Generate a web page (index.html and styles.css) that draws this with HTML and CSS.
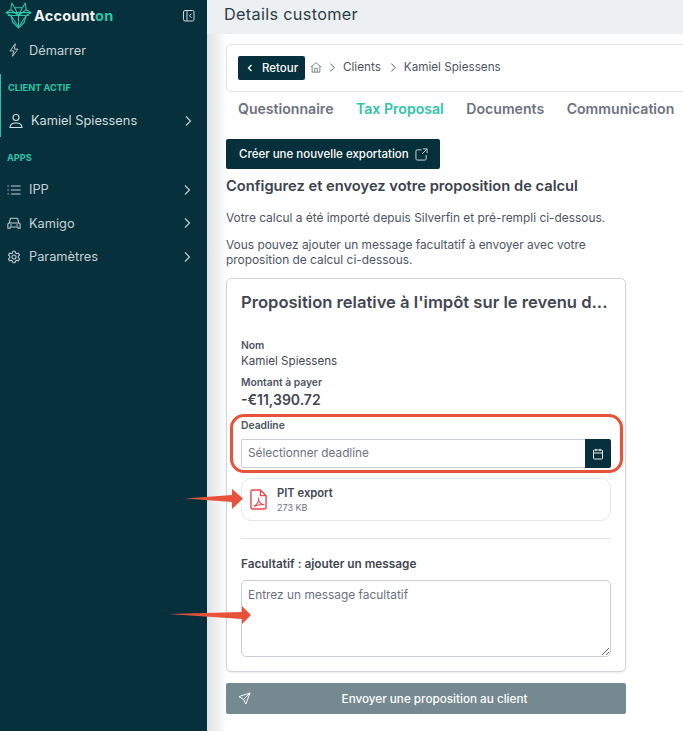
FILE: index.html
```html
<!DOCTYPE html>
<html lang="fr">
<head>
<meta charset="utf-8">
<title>Details customer</title>
<link rel="stylesheet" href="styles.css">
</head>
<body>
<div class="app">
  <aside class="sidebar">
    <div class="brand">
      <svg class="logo" viewBox="0 0 28 28" fill="none" stroke="#2fc4a8" stroke-width="1.1" stroke-linejoin="round">
        <path d="M7 1l3 5h8l3-5 1 7 5 3-5 3-2 7-6 6-6-6-2-7-5-3 5-3z"/>
        <path d="M1 11h26M3 14h22M6 8l8 6 8-6M6 14l8 12 8-12M10 6l4 8 4-8M14 14v12"/>
      </svg>
      <span class="brand-name">Account<em>on</em></span>
      <svg class="collapse" viewBox="0 0 12 12" fill="none" stroke="#cfd8da" stroke-width="1"><rect x=".5" y=".5" width="10.5" height="10.5" rx="1.5"/><path d="M4 .5v10.500M8.500 3.700L6.500 5.800l2 2.100"/></svg>
    </div>
    <a class="nav first">
      <svg class="ico" viewBox="0 0 16 16" fill="none" stroke="#c3ced0" stroke-width="1.100" stroke-linejoin="round"><path d="M9.500 .8L3.500 9h4.200l-1.500 6.200L12.500 7H8.300z"/></svg>
      <span>Démarrer</span>
    </a>
    <div class="active-block">
      <div class="section">CLIENT ACTIF</div>
      <a class="nav client">
        <svg class="ico" viewBox="0 0 16 16" fill="none" stroke="#d5dddf" stroke-width="1.100" stroke-linecap="round"><circle cx="8" cy="4.500" r="3"/><path d="M2 14.500c0-3 2.500-4.500 6-4.500s6 1.500 6 4.500z"/></svg>
        <span>Kamiel Spiessens</span>
        <svg class="chev" viewBox="0 0 8 12" fill="none" stroke="#c3ced0" stroke-width="1.200"><path d="M2 1.500L6.500 6 2 10.500"/></svg>
      </a>
    </div>
    <div class="section apps">APPS</div>
    <a class="nav">
      <svg class="ico" viewBox="0 0 16 16" fill="none" stroke="#c3ced0" stroke-width="1.200"><path d="M4.500 3.500h11M4.500 8h11M4.500 12.500h11M.500 3.500h1.500M.500 8h1.500M.500 12.500h1.500"/></svg>
      <span>IPP</span>
      <svg class="chev" viewBox="0 0 8 12" fill="none" stroke="#c3ced0" stroke-width="1.200"><path d="M2 1.500L6.500 6 2 10.500"/></svg>
    </a>
    <a class="nav">
      <svg class="ico" viewBox="0 0 16 16" fill="none" stroke="#c3ced0" stroke-width="1.200" stroke-linejoin="round"><path d="M1 14V9l1.500-1 1.500-5.500h8L13.500 8 15 9v5h-2.500v-1.500h-9V14zM2.500 8h11M3.500 10.300h2M10.500 10.300h2"/></svg>
      <span>Kamigo</span>
      <svg class="chev" viewBox="0 0 8 12" fill="none" stroke="#c3ced0" stroke-width="1.200"><path d="M2 1.500L6.500 6 2 10.500"/></svg>
    </a>
    <a class="nav">
      <svg class="ico" viewBox="0 0 16 16" fill="none" stroke="#c3ced0" stroke-width="1.200" stroke-linejoin="round"><circle cx="8" cy="8" r="2.300"/><path d="M6.700 1.500h2.600l.4 1.900 1.500.8 1.800-.7 1.300 2.300-1.400 1.300v1.800l1.400 1.300-1.300 2.300-1.800-.7-1.500.8-.4 1.900H6.700l-.4-1.900-1.500-.8-1.800.7-1.300-2.300 1.400-1.300V7.100L1.700 5.800 3 3.500l1.800.7 1.500-.8z"/></svg>
      <span>Paramètres</span>
      <svg class="chev" viewBox="0 0 8 12" fill="none" stroke="#c3ced0" stroke-width="1.200"><path d="M2 1.500L6.500 6 2 10.500"/></svg>
    </a>
  </aside>

  <main class="main">
    <header class="topbar">Details customer</header>
    <div class="content">
      <nav class="crumbs">
        <button class="back"><svg class="back-ico" viewBox="0 0 8 10" fill="none" stroke="#fff" stroke-width="1.300"><path d="M5.500 2L2.500 5l3 3"/></svg>Retour</button>
        <svg class="home" viewBox="0 0 14 14" fill="none" stroke="#5b6672" stroke-width=".9"><path d="M1 7l6-5 6 5M2.500 6v7h9V6M5.500 13V8.500h3V13"/></svg>
        <svg class="sep" viewBox="0 0 8 12" fill="none" stroke="#4a5560" stroke-width="1.100"><path d="M1.500 1.500L6 6l-4.500 4.500"/></svg>
        <span>Clients</span>
        <svg class="sep" viewBox="0 0 8 12" fill="none" stroke="#4a5560" stroke-width="1.100"><path d="M1.500 1.500L6 6l-4.500 4.500"/></svg>
        <span>Kamiel Spiessens</span>
      </nav>
      <div class="tabs">
        <span>Questionnaire</span>
        <span class="tab-on">Tax Proposal</span>
        <span>Documents</span>
        <span>Communication</span>
      </div>
      <button class="export">Créer une nouvelle exportation
        <svg class="export-ico" viewBox="0 0 14 14" fill="none" stroke="#d8e0e2" stroke-width="1"><path d="M7 2H2.500A1.500 1.500 0 0 0 1 3.500v8A1.500 1.500 0 0 0 2.500 13h8a1.500 1.500 0 0 0 1.500-1.500V7.500M8.500 1H13v4.500M13 1L7.500 6.500"/></svg>
      </button>
      <h2 class="heading">Configurez et envoyez votre proposition de calcul</h2>
      <p class="para p1">Votre calcul a été importé depuis Silverfin et pré-rempli ci-dessous.</p>
      <p class="para p2">Vous pouvez ajouter un message facultatif à envoyer avec votre proposition de calcul ci-dessous.</p>

      <section class="card">
        <h3 class="card-title">Proposition relative à l'impôt sur le revenu d...</h3>
        <div class="label l-nom">Nom</div>
        <div class="value">Kamiel Spiessens</div>
        <div class="label l-mont">Montant à payer</div>
        <div class="amount">-€11,390.72</div>
        <div class="label l-dead">Deadline</div>
        <div class="date">
          <div class="date-input">Sélectionner deadline</div>
          <div class="date-btn"><svg viewBox="0 0 12 12" fill="none" stroke="#fff" stroke-width=".9"><rect x="1.500" y="2" width="9" height="9" rx="1"/><path d="M1.500 5h9M4 .8v2.400M8 .8v2.400"/></svg></div>
        </div>
        <div class="file">
          <svg class="pdf" viewBox="0 0 18 22" fill="none" stroke="#e8484c" stroke-width="1.500" stroke-linejoin="round"><path d="M11 1H3a2 2 0 0 0-2 2v16a2 2 0 0 0 2 2h12a2 2 0 0 0 2-2V7z"/><path d="M11 1v6h6" stroke-width="1.300"/><path d="M9 9c.8 3-1.500 7-5 9.500M9 12c1 2 3 4 5.500 4.500-2.500-.5-6 0-9 1.500" stroke-width="1.100"/></svg>
          <div class="file-text">
            <div class="file-name">PIT export</div>
            <div class="file-size">273 KB</div>
          </div>
        </div>
        <hr class="rule">
        <div class="label-lg">Facultatif : ajouter un message</div>
        <textarea class="message" placeholder="Entrez un message facultatif"></textarea>
      </section>
      <button class="send">
        <svg class="send-ico" viewBox="0 0 14 14" fill="none" stroke="#fff" stroke-width="1" stroke-linejoin="round"><path d="M13 1L1 5l5 3 2.500 5zM13 1L6 8"/></svg>
        Envoyer une proposition au client
      </button>
    </div>
  </main>
</div>

<div class="callout"></div>
<svg class="arrow arrow-a" viewBox="0 0 58 20"><path d="M0 9.500L47 6V0l11 9.500L47 20v-7z" fill="#e8523a"/></svg>
<svg class="arrow arrow-b" viewBox="0 0 84 18"><path d="M0 8L74 6V0l9 9-9 9v-5z" fill="#e8523a"/></svg>
</body>
</html>
```

FILE: styles.css
```css
* { box-sizing: border-box; }
html, body { margin: 0; height: 731px; overflow: hidden; background: #fff; }
body { font-family: Inter, "Liberation Sans", sans-serif; color: #3f4752; position: relative; }
button { font-family: inherit; border: 0; cursor: pointer; }

.app { display: flex; height: 731px; }

.sidebar { width: 207px; flex: none; background: #06303b; color: #c9d3d5; font-size: 12.800px; }
.brand { height: 34px; display: flex; align-items: center; padding: 0 0 3px 5px; }
.logo { width: 27px; height: 27px; flex: none; }
.brand-name { margin-left: 2px; font-size: 14.500px; font-weight: 700; color: #f2f5f5; letter-spacing: .2px; }
.brand-name em { font-style: normal; color: #2fc4a8; }
.collapse { width: 12px; height: 12px; margin-left: auto; margin-right: 12px; }

.nav { display: flex; align-items: center; height: 33.500px; padding-left: 7px; padding-right: 16px; }
.nav.first { height: 32px; }
.ico { width: 14px; height: 14px; flex: none; margin-right: 8px; }
.chev { width: 8px; height: 12px; margin-left: auto; }
.active-block { margin-top: 8px; height: 63px; border-left: 1.500px solid #2fc4a8; }
.section { height: 27px; line-height: 28px; padding-left: 7px; font-size: 9.200px; font-weight: 700; color: #2fc4a8; }
.nav.client { height: 39px; padding-left: 7px; padding-right: 15px; color: #d5dddf; }
.nav.client .ico { width: 16px; height: 16px; margin-right: 7px; }
.section.apps { margin-top: 7px; height: 21px; line-height: 28px; margin-bottom: 8px; }

.main { flex: 1; min-width: 0; overflow: hidden; position: relative; }
.main::before { content: ""; position: absolute; left: 0; top: 0; bottom: 0; width: 20px; background: linear-gradient(90deg, #dfe1e2, rgba(255,255,255,0)); }
.topbar { height: 34px; background: #edf0f3; padding-left: 17px; font-size: 16.300px; line-height: 29px; color: #2b3d46; letter-spacing: .3px; position: relative; }
.content { padding: 10px 0 0 19px; position: relative; }

.crumbs { width: 470px; height: 48px; border: 1px solid #e1e4e8; border-radius: 4px; background: #fff; display: flex; align-items: center; padding-left: 11px; font-size: 11.700px; color: #4b5563; }
.back { width: 67px; height: 24px; background: #06303b; color: #fff; border-radius: 2px; font-size: 11.500px; font-weight: 500; display: flex; align-items: center; padding: 0 0 0 8px; gap: 8px; margin-right: 5px; }
.back-ico { width: 8px; height: 10px; }
.home { width: 12px; height: 12px; margin-right: 7px; margin-bottom: 2px; }
.sep { width: 7px; height: 11px; margin-right: 7px; margin-bottom: 1px; }
.crumbs span { margin-right: 9px; margin-bottom: 2px; }

.tabs { display: flex; gap: 22.500px; height: 36px; padding-left: 12px; padding-top: 8px; font-size: 14.100px; line-height: 17px; font-weight: 600; color: #6b7280; white-space: nowrap; }
.tab-on { color: #2fc4a8; }

.export { width: 214px; height: 30px; margin-top: 11px; background: #06303b; color: #fff; border-radius: 2px; font-size: 11.500px; font-weight: 500; display: flex; align-items: center; padding: 0 0 0 13px; white-space: nowrap; }
.export-ico { width: 13px; height: 13px; margin-left: 6px; flex: none; }

.heading { margin: 8px 0 0; font-size: 14.700px; line-height: 18px; font-weight: 600; color: #3a424d; }
.para { margin: 0; font-size: 11.900px; line-height: 15px; color: #4b5563; width: 400px; }
.p1 { margin-top: 15px; }
.p2 { margin-top: 12px; }

.card { width: 400px; height: 394px; margin-top: 11px; border: 1px solid #d1d5db; border-radius: 5px; padding: 13px 14px 0; box-shadow: 0 1px 2px rgba(0,0,0,.08); background: #fff; }
.card-title { margin: 0; font-size: 16.600px; line-height: 20px; font-weight: 600; color: #3f4752; white-space: nowrap; }
.label { font-size: 10.300px; font-weight: 600; color: #4b5563; line-height: 12px; }
.l-nom { margin-top: 27px; }
.value { font-size: 11.600px; line-height: 16px; color: #3f4752; margin-top: 2px; }
.l-mont { margin-top: 7px; }
.amount { font-size: 14px; line-height: 18px; font-weight: 600; color: #3f4752; margin-top: 3px; }
.l-dead { margin-top: 10px; }
.date { display: flex; height: 29px; width: 370px; margin-top: 8px; }
.date-input { flex: 1; border: 1px solid #c9ced6; border-right: 0; border-radius: 2px 0 0 2px; font-size: 11.800px; line-height: 27px; color: #6b7280; padding-left: 6px; }
.date-btn { width: 26px; background: #06303b; border-radius: 0 2px 2px 0; display: flex; align-items: center; justify-content: center; }
.date-btn svg { width: 12px; height: 12px; }

.file { width: 370px; height: 43px; margin-top: 10px; border: 1px solid #e5e7eb; border-radius: 10px; display: flex; align-items: center; padding-left: 8px; }
.pdf { width: 17px; height: 21px; flex: none; margin-right: 10px; }
.file-name { font-size: 11.200px; line-height: 14px; font-weight: 600; color: #3f4752; }
.file-size { font-size: 9px; line-height: 13px; color: #6b7280; margin-top: 1px; }
.rule { width: 370px; margin: 17px 0 0; border: 0; border-top: 1px solid #e0e3e7; }
.label-lg { margin-top: 18px; font-size: 11.800px; line-height: 14px; font-weight: 600; color: #3f4752; }
.message { display: block; width: 370px; height: 77px; margin-top: 9px; border: 1px solid #c9ced6; border-radius: 5px; padding: 6px; font-family: inherit; font-size: 11.900px; background: #fff; }
.message::placeholder { color: #6b7280; }

.send { width: 400px; height: 31px; margin-top: 11px; padding: 0 0 0 17px; background: #758a90; color: #fff; border-radius: 2px; font-size: 11.700px; font-weight: 500; position: relative; }
.send-ico { position: absolute; left: 12px; top: 9px; width: 13px; height: 13px; }

.callout { position: absolute; left: 230px; top: 414px; width: 393px; height: 59px; border: 3.500px solid #e8523a; border-radius: 14px; }
.arrow { position: absolute; }
.arrow-a { left: 185px; top: 489px; width: 58px; height: 20px; }
.arrow-b { left: 168px; top: 606px; width: 84px; height: 18px; }
```
